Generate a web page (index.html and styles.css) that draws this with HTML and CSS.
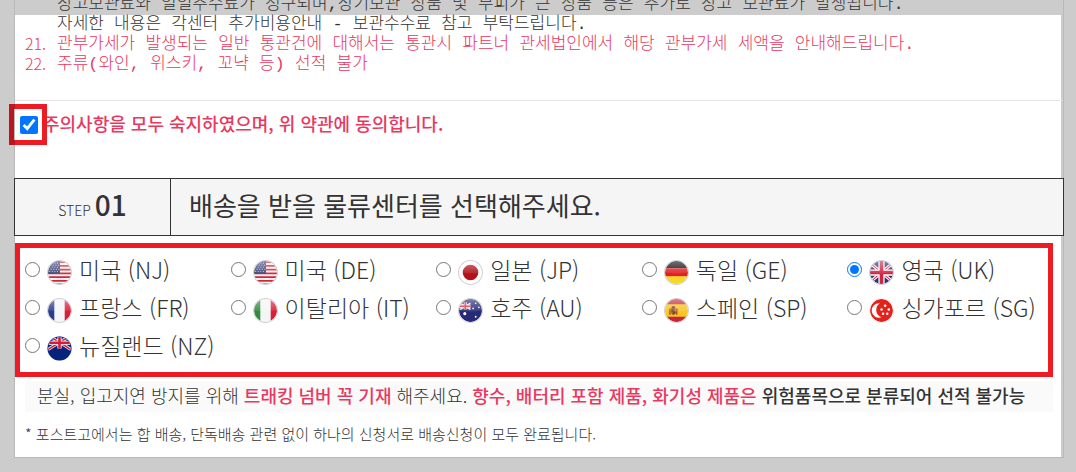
FILE: index.html
```html
<!DOCTYPE html>
<html lang="ko">
<head>
    <meta charset="UTF-8">
    <meta name="viewport" content="width=device-width, initial-scale=1.0">
    <title>배송 신청서</title>
    <link rel="stylesheet" href="styles.css">
</head>
<body>

    <!-- Flag parts -->
    <svg class="defs" aria-hidden="true">
        <defs>
            <clipPath id="round"><circle cx="12" cy="12" r="11"/></clipPath>
            <linearGradient id="gloss" x1="0" y1="0" x2="0" y2="1">
                <stop offset="0" stop-color="#fff" stop-opacity=".4"/>
                <stop offset="1" stop-color="#fff" stop-opacity=".08"/>
            </linearGradient>
            <g id="shine">
                <path d="M1 12A11 11 0 0 1 23 12Q12 14 1 12Z" fill="url(#gloss)"/>
                <circle cx="12" cy="12" r="11.5" fill="none" stroke="#d2d2d4"/>
            </g>
            <g id="usa">
                <g clip-path="url(#round)">
                    <path fill="#f7f4f5" d="M0 0h24v24H0z"/>
                    <path stroke="#d0283b" stroke-width="1.8" d="M0 2h24M0 5.6h24M0 9.2h24M0 12.8h24M0 16.4h24M0 20h24M0 23.4h24"/>
                    <path fill="#3a4577" d="M0 0h12.500v13H0z"/>
                    <path stroke="#aeb5d0" stroke-width="1" stroke-dasharray="1 1.500" d="M2 3h10M3 5h9M2 7h10M1 9h11M2 11h10"/>
                </g>
                <use href="#shine"/>
            </g>
            <g id="jack">
                <path fill="#2b3278" d="M0 0h24v24H0z"/>
                <path stroke="#fff" stroke-width="3" d="M0 2l24 20M24 2L0 22"/>
                <path stroke="#cf2442" stroke-width="1" d="M0 2l24 20M24 2L0 22"/>
                <path stroke="#fff" stroke-width="6" d="M12 0v24M0 12h24"/>
                <path stroke="#cf2442" stroke-width="3.5" d="M12 0v24M0 12h24"/>
            </g>
        </defs>
    </svg>

    <main class="sheet">
        <div class="sheet-inner">
            <!-- Terms -->
            <div class="terms">
                <p class="term"><span class="term-text">창고보관료와 일일추수료가 청구되며,장기보관 상품 및 부피가 큰 상품 등은 추가로 창고 보관료가 발생됩니다.</span></p>
                <p class="term"><span class="term-text">자세한 내용은 각센터 추가비용안내 - 보관수수료 참고 부탁드립니다.</span></p>
                <p class="term point"><span class="term-no">21.</span><span class="term-text">관부가세가 발생되는 일반 통관건에 대해서는 통관시 파트너 관세법인에서 해당 관부가세 세액을 안내해드립니다.</span></p>
                <p class="term point"><span class="term-no">22.</span><span class="term-text">주류(와인, 위스키, 꼬냑 등) 선적 불가</span></p>
            </div>

            <!-- Agreement -->
            <div class="agree">
                <span class="agree-check"><input type="checkbox" id="agree" checked></span>
                <label for="agree">주의사항을 모두 숙지하였으며, 위 약관에 동의합니다.</label>
            </div>

            <!-- Step 01 -->
            <div class="step">
                <div class="step-no">STEP <strong>01</strong></div>
                <h2 class="step-title">배송을 받을 물류센터를 선택해주세요.</h2>
            </div>

            <div class="center-box">
                <div class="center-list">
                    <label class="center">
                        <input type="radio" name="center" value="NJ">
                        <svg class="flag" viewBox="0 0 24 24"><use href="#usa"/></svg>
                        <span>미국 (NJ)</span>
                    </label>
                    <label class="center">
                        <input type="radio" name="center" value="DE">
                        <svg class="flag" viewBox="0 0 24 24"><use href="#usa"/></svg>
                        <span>미국 (DE)</span>
                    </label>
                    <label class="center">
                        <input type="radio" name="center" value="JP">
                        <svg class="flag" viewBox="0 0 24 24">
                            <circle cx="12" cy="12" r="11" fill="#fff"/>
                            <circle cx="12" cy="12" r="7.500" fill="#b0131b"/>
                            <use href="#shine"/>
                        </svg>
                        <span>일본 (JP)</span>
                    </label>
                    <label class="center">
                        <input type="radio" name="center" value="GE">
                        <svg class="flag" viewBox="0 0 24 24">
                            <g clip-path="url(#round)">
                                <path fill="#111" d="M0 0h24v8H0z"/>
                                <path fill="#e01f26" d="M0 8h24v8H0z"/>
                                <path fill="#f7d826" d="M0 15.500h24V24H0z"/>
                            </g>
                            <use href="#shine"/>
                        </svg>
                        <span>독일 (GE)</span>
                    </label>
                    <label class="center">
                        <input type="radio" name="center" value="UK" checked>
                        <svg class="flag" viewBox="0 0 24 24">
                            <g clip-path="url(#round)"><use href="#jack"/></g>
                            <use href="#shine"/>
                        </svg>
                        <span>영국 (UK)</span>
                    </label>
                    <label class="center">
                        <input type="radio" name="center" value="FR">
                        <svg class="flag" viewBox="0 0 24 24">
                            <g clip-path="url(#round)">
                                <path fill="#f4f5f8" d="M0 0h24v24H0z"/>
                                <path fill="#2b3a8c" d="M0 0h7v24H0z"/>
                                <path fill="#d91e38" d="M17 0h7v24h-7z"/>
                            </g>
                            <use href="#shine"/>
                        </svg>
                        <span>프랑스 (FR)</span>
                    </label>
                    <label class="center">
                        <input type="radio" name="center" value="IT">
                        <svg class="flag" viewBox="0 0 24 24">
                            <g clip-path="url(#round)">
                                <path fill="#f4f5f5" d="M0 0h24v24H0z"/>
                                <path fill="#338a40" d="M0 0h7v24H0z"/>
                                <path fill="#d91e38" d="M17 0h7v24h-7z"/>
                            </g>
                            <use href="#shine"/>
                        </svg>
                        <span>이탈리아 (IT)</span>
                    </label>
                    <label class="center">
                        <input type="radio" name="center" value="AU">
                        <svg class="flag" viewBox="0 0 24 24">
                            <g clip-path="url(#round)">
                                <path fill="#272a77" d="M0 0h24v24H0z"/>
                                <path stroke="#f0dfe8" stroke-width="1.500" d="M2 5l10 6M12 5L2 11"/>
                                <path stroke="#f0dfe8" stroke-width="3" d="M7 4v7M0 8h12"/>
                                <path stroke="#d93247" stroke-width="1.500" d="M7 4v7M0 8h12"/>
                                <g fill="#fff">
                                    <circle cx="6.500" cy="15" r="1.500"/>
                                    <circle cx="17" cy="5" r=".8"/>
                                    <circle cx="14.500" cy="10" r=".8"/>
                                    <circle cx="20" cy="9" r=".8"/>
                                    <circle cx="17" cy="18" r=".9"/>
                                </g>
                            </g>
                            <use href="#shine"/>
                        </svg>
                        <span>호주 (AU)</span>
                    </label>
                    <label class="center">
                        <input type="radio" name="center" value="SP">
                        <svg class="flag" viewBox="0 0 24 24">
                            <g clip-path="url(#round)">
                                <path fill="#f7c524" d="M0 0h24v24H0z"/>
                                <path fill="#c9243a" d="M0 0h24v6H0zM0 18h24v6H0z"/>
                                <path fill="#a65b2b" d="M5 10h1.500v6H5zM11.500 10H13v6h-1.500zM7 9h4v6l-2 1.500L7 15z"/>
                                <path fill="#6b4236" d="M7.500 8h3v1.500h-3zM7 11h2v2H7zM9 13h2v2H9z"/>
                            </g>
                            <use href="#shine"/>
                        </svg>
                        <span>스페인 (SP)</span>
                    </label>
                    <label class="center">
                        <input type="radio" name="center" value="SG">
                        <svg class="flag" viewBox="0 0 24 24">
                            <circle cx="12" cy="12" r="11" fill="#e3221c"/>
                            <path fill="#fff" d="M10.500 5A7 7 0 1 0 12 18.500A7.500 7.500 0 0 1 10.500 5Z"/>
                            <g fill="#fff">
                                <circle cx="15.500" cy="7.500" r="1.200"/>
                                <circle cx="12" cy="11" r="1.200"/>
                                <circle cx="19" cy="11" r="1.200"/>
                                <circle cx="13.500" cy="15" r="1.200"/>
                                <circle cx="17.500" cy="15" r="1.200"/>
                            </g>
                            <circle cx="12" cy="12" r="11.500" fill="none" stroke="#eee"/>
                        </svg>
                        <span>싱가포르 (SG)</span>
                    </label>
                    <label class="center">
                        <input type="radio" name="center" value="NZ">
                        <svg class="flag" viewBox="0 0 24 24">
                            <circle cx="12" cy="12" r="12" fill="#dde0ea"/>
                            <circle cx="12" cy="12" r="11.500" fill="#04247c"/>
                            <g clip-path="url(#round)">
                                <path stroke="#fff" stroke-width="3" d="M12 6L1 13M12 6l11 7M12 6L3 1M12 6l9-5"/>
                                <path stroke="#d01c38" stroke-width="1.500" d="M12 6L1 13M12 6l11 7M12 6L3 1M12 6l9-5"/>
                                <path stroke="#fff" stroke-width="4" d="M12 0v12M0 6.500h24"/>
                                <path stroke="#d01c38" stroke-width="2.500" d="M12 0v12M0 6.500h24"/>
                            </g>
                        </svg>
                        <span>뉴질랜드 (NZ)</span>
                    </label>
                </div>
            </div>

            <!-- Notice -->
            <p class="notice">분실, 입고지연 방지를 위해 <strong class="point">트래킹 넘버 꼭 기재</strong> 해주세요. <strong class="point">향수, 배터리 포함 제품, 화기성 제품은</strong> <strong>위험품목으로 분류되어 선적 불가능</strong></p>
            <p class="note">* 포스트고에서는 합 배송, 단독배송 관련 없이 하나의 신청서로 배송신청이 모두 완료됩니다.</p>
        </div>
    </main>

</body>
</html>
```
FILE: styles.css
```css
* {
    box-sizing: border-box;
}

body {
    margin: 0;
    background: #ccc;
    color: #333;
    font-family: "Noto Sans CJK KR", sans-serif;
}

p,
h2 {
    margin: 0;
}

.defs {
    position: absolute;
    width: 0;
    height: 0;
}

.point {
    color: #e9385f;
}

/* Sheet */
.sheet {
    margin: 0 12px 14px 14px;
    padding-right: 2px;
    border: 1px solid #b9b9b9;
    border-top: none;
}

.sheet-inner {
    display: flow-root;
    padding-bottom: 12px;
    background: linear-gradient(#ccc 15px, #fff 15px);
}

/* Terms */
.terms {
    margin: -5px -2px 0 0;
    padding: 0 10px 25px;
    border-bottom: 1px solid #e5e5e5;
    font-family: "Liberation Mono", "Noto Sans CJK KR", monospace;
    font-size: 17px;
    font-weight: 300;
    line-height: 20px;
}

.term {
    display: grid;
    grid-template-columns: 32px 1fr;
    grid-auto-rows: 20px;
    white-space: nowrap;
}

.term-no {
    font-family: "Noto Sans CJK KR", sans-serif;
    font-size: 16px;
    line-height: 16px;
}

.term-text {
    grid-column: 2;
}

/* Agreement */
.agree {
    display: flex;
    align-items: center;
    height: 48px;
    margin-bottom: 29px;
    color: #e9385f;
    font-size: 18px;
    font-weight: 500;
}

.agree label {
    line-height: 24px;
    padding-bottom: 4px;
}

.agree-check {
    position: relative;
    display: flex;
    padding: 0 5px;
}

.agree-check input {
    width: 18px;
    height: 18px;
    margin: 0;
    accent-color: #0075ff;
}

.agree-check::before {
    content: "";
    position: absolute;
    inset: -12px -4px -11px -6px;
    border: 5px solid #ed1c24;
}

.agree-check::after {
    content: "";
    position: absolute;
    inset: -12px auto -11px -6px;
    width: 6px;
    background: linear-gradient(#bd171d, #bd171d) left / 5px 100% no-repeat,
        linear-gradient(#bd171d, #bd171d) top / 100% 5px no-repeat,
        linear-gradient(#bd171d, #bd171d) bottom / 100% 5px no-repeat;
}

/* Step */
.step {
    display: flex;
    align-items: center;
    height: 58px;
    margin: 0 -3px 7px -1px;
    border: 1px solid #333;
    background: #f5f5f5;
}

.step-no {
    display: flex;
    align-items: baseline;
    align-self: stretch;
    justify-content: center;
    gap: 4px;
    width: 156px;
    border-right: 1px solid #333;
    font-size: 14px;
    font-weight: 300;
    line-height: 50px;
}

.step-no strong {
    font-size: 28px;
    font-weight: 500;
}

.step-title {
    padding: 0 0 4px 18px;
    font-size: 26px;
    font-weight: 400;
    line-height: 50px;
}

/* Centers */
.center-box {
    margin: 0 8px 4px 0;
    padding: 3px 0 7px 5px;
    border: 5px solid #ed1c24;
}

.center-list {
    display: grid;
    grid-template-columns: repeat(5, 1fr);
    grid-auto-rows: 38px;
    margin-right: -5px;
}

.center {
    display: flex;
    align-items: center;
    font-size: 23px;
    font-weight: 300;
    line-height: 34px;
    white-space: nowrap;
}

.center span {
    padding-bottom: 3px;
}

.center input {
    width: 15px;
    height: 15px;
    margin: 0 7px 2px 0;
    accent-color: #0075ff;
}

.flag {
    width: 25px;
    height: 25px;
    margin: 4px 7px 0 0;
}

/* Notice */
.notice {
    margin: 0 8px 0 10px;
    padding: 0 0 2px 12px;
    background: #fafafa;
    font-size: 18px;
    font-weight: 300;
    line-height: 29px;
    white-space: nowrap;
}

.notice strong {
    font-weight: 500;
}

.note {
    margin: 11px 10px 0;
    font-size: 15px;
    font-weight: 300;
    line-height: 22px;
}
```
